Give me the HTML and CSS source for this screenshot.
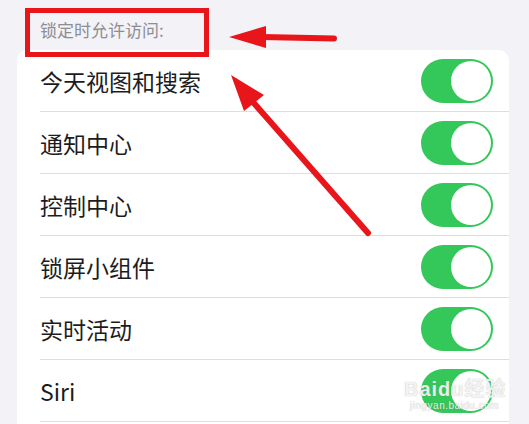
FILE: index.html
```html
<!DOCTYPE html>
<html lang="zh-CN">
<head>
    <meta charset="UTF-8">
    <meta name="viewport" content="width=device-width, initial-scale=1.0">
    <title>锁定时允许访问</title>
    <link rel="stylesheet" href="styles.css">
</head>
<body>
    <div class="page">
        <!-- Section header -->
        <div class="section-title">锁定时允许访问:</div>

        <!-- Settings list -->
        <div class="card">
            <div class="row"><div class="row-inner"><span class="label">今天视图和搜索</span><span class="toggle on"></span></div></div>
            <div class="row"><div class="row-inner"><span class="label">通知中心</span><span class="toggle on"></span></div></div>
            <div class="row"><div class="row-inner"><span class="label">控制中心</span><span class="toggle on"></span></div></div>
            <div class="row"><div class="row-inner"><span class="label">锁屏小组件</span><span class="toggle on"></span></div></div>
            <div class="row"><div class="row-inner"><span class="label">实时活动</span><span class="toggle on"></span></div></div>
            <div class="row"><div class="row-inner"><span class="label">Siri</span><span class="toggle on"></span></div></div>
        </div>

        <!-- Annotation overlay -->
        <svg class="marks" width="529" height="424" viewBox="0 0 529 424">
            <rect x="27.5" y="10.5" width="179" height="44" fill="none" stroke="#e8151b" stroke-width="5"/>
            <line x1="262" y1="37" x2="334" y2="38.5" stroke="#e8151b" stroke-width="6" stroke-linecap="round"/>
            <polygon points="229,37 266,26 266,48" fill="#e8151b"/>
            <line x1="252" y1="101" x2="368" y2="233" stroke="#e8151b" stroke-width="6" stroke-linecap="round"/>
            <polygon points="231,75 264,95 244,111" fill="#e8151b"/>
        </svg>

        <!-- Watermark -->
        <div class="watermark">
            <div class="wm-logo">Baidu经验</div>
            <div class="wm-url">jingyan.baidu.com</div>
        </div>
    </div>
</body>
</html>
```

FILE: styles.css
```css
* {
    margin: 0;
    padding: 0;
    box-sizing: border-box;
}

body {
    background-color: #f2f2f7;
    font-family: "Noto Sans CJK SC", "Noto Sans", sans-serif;
    color: #1c1c1e;
    overflow: hidden;
}

.page {
    position: relative;
    width: 529px;
    height: 424px;
    overflow: hidden;
}

/* Section header */
.section-title {
    height: 50px;
    padding: 19px 0 0 40px;
    font-size: 17px;
    line-height: 22px;
    color: #8d8d92;
}

/* Card */
.card {
    margin: 0 20px 0 17px;
    padding-bottom: 20px;
    background-color: #fff;
    border-radius: 10px;
    overflow: hidden;
}

.row {
    padding-left: 23px;
    height: 62px;
}

.row-inner {
    display: flex;
    align-items: center;
    justify-content: space-between;
    height: 62px;
    padding-right: 16px;
    border-bottom: 1px solid #dedee2;
}

.label {
    font-size: 23px;
    line-height: 30px;
}

/* Toggle switch */
.toggle {
    position: relative;
    width: 72px;
    height: 44px;
    border-radius: 22px;
    background-color: #e5e5ea;
}

.toggle::after {
    content: "";
    position: absolute;
    top: 2px;
    left: 2px;
    width: 40px;
    height: 40px;
    border-radius: 50%;
    background-color: #fff;
    box-shadow: 0 0 0 1px rgba(52, 199, 89, 0.5);
}

.toggle.on {
    background-color: #34c759;
}

.toggle.on::after {
    left: 30px;
}

/* Annotations */
.marks {
    position: absolute;
    top: 0;
    left: 0;
    pointer-events: none;
}

.watermark {
    position: absolute;
    left: 404px;
    top: 378px;
    color: rgba(255, 255, 255, 0.85);
    text-shadow: 0 0 1px rgba(120, 120, 120, 0.6);
    font-family: "Liberation Sans", "Noto Sans CJK SC", sans-serif;
}

.wm-logo {
    font-size: 20px;
    font-weight: bold;
    line-height: 22px;
    letter-spacing: 1px;
}

.wm-url {
    font-size: 10px;
    line-height: 12px;
    padding-left: 6px;
    letter-spacing: 0.5px;
}
```
